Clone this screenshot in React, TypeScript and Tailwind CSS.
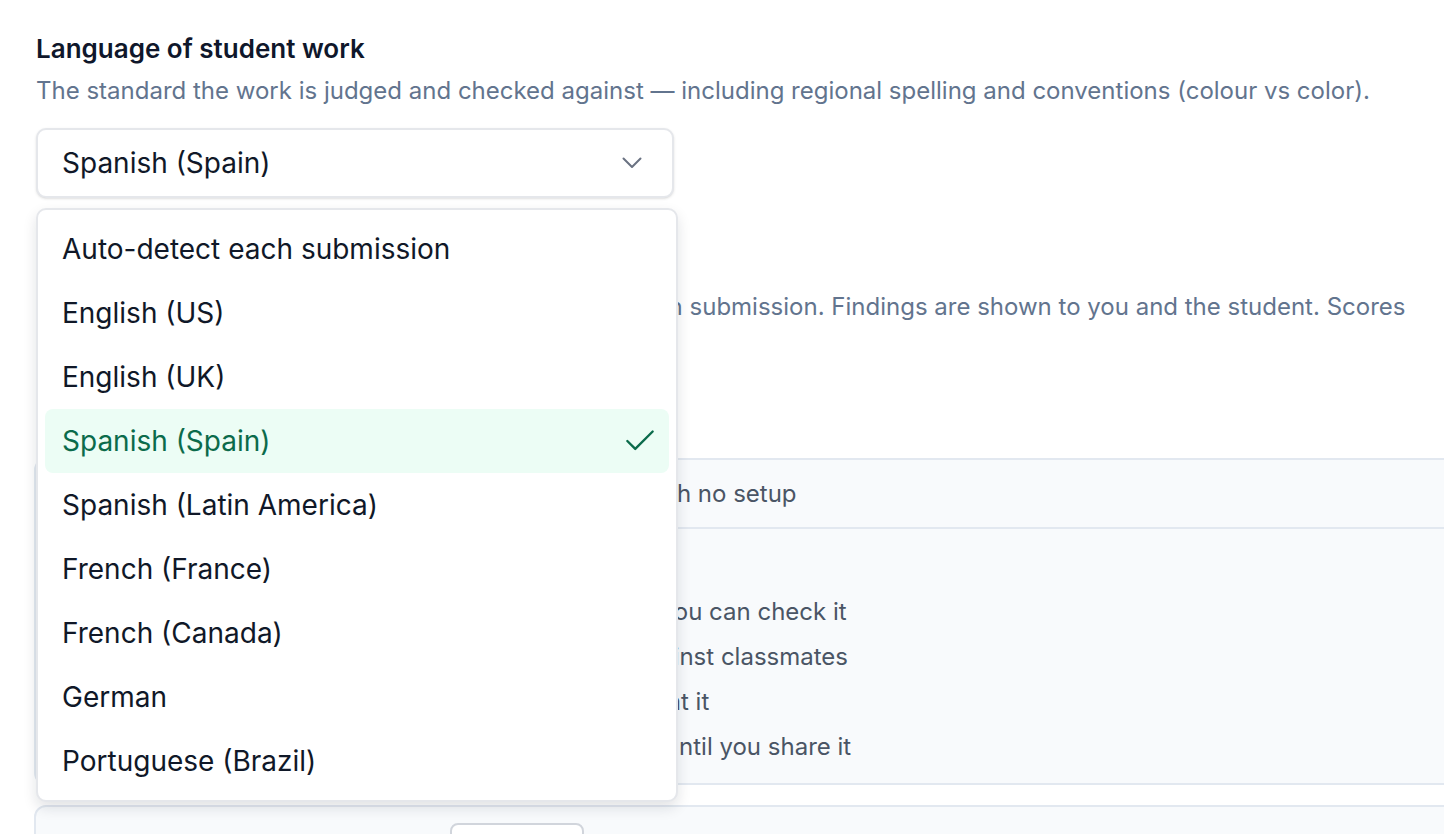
import { Check } from "lucide-react";

const LANGUAGES = [
  "Auto-detect each submission",
  "English (US)",
  "English (UK)",
  "Spanish (Spain)",
  "Spanish (Latin America)",
  "French (France)",
  "French (Canada)",
  "German",
  "Portuguese (Brazil)",
];

const SELECTED = "Spanish (Spain)";

function Chevron() {
  return (
    <svg width="20" height="12" viewBox="0 0 20 12" fill="none" className="text-gray-500">
      <path d="M1.5 1.5l8.5 8.5 8.5-8.5" stroke="currentColor" strokeWidth="2" strokeLinecap="round" strokeLinejoin="round" />
    </svg>
  );
}

function LanguageSelect() {
  return (
    <div className="relative w-[638px]">
      <button
        type="button"
        className="flex h-[70px] w-full items-center justify-between rounded-[10px] border-2 border-gray-200 bg-white pl-[24px] pr-[30px] text-left text-[28px] text-gray-900 shadow-sm"
      >
        <span>{SELECTED}</span>
        <Chevron />
      </button>

      {/* open listbox */}
      <div className="absolute left-0 top-[80px] z-10 w-[642px] rounded-[10px] border-2 border-gray-200 bg-white p-[7px] shadow-[0_6px_14px_rgba(15,23,42,0.12)]">
        {LANGUAGES.map((lang) => {
          const active = lang === SELECTED;
          return (
            <div
              key={lang}
              className={
                active
                  ? "flex h-[64px] items-center justify-between rounded-[8px] bg-[#ecfdf5] pl-[17px] pr-[10px] text-[28px] text-[#0b6b4b]"
                  : "flex h-[64px] items-center justify-between rounded-[8px] pl-[17px] pr-[10px] text-[28px] text-gray-900"
              }
            >
              <span>{lang}</span>
              {active && <Check size={38} strokeWidth={1.5} className="text-[#0b6b4b]" />}
            </div>
          );
        })}
      </div>
    </div>
  );
}

export default function App() {
  return (
    <div
      className="h-[834px] w-[1444px] overflow-hidden bg-white"
      style={{ fontFamily: "Inter, 'Noto Sans', sans-serif" }}
    >
      <div className="w-[1500px] pl-[36px] pt-[34px]">
        <section>
          <h2 className="text-[26px] font-semibold leading-[30px] text-slate-900">Language of student work</h2>
          <p className="mt-[12px] text-[24px] leading-[30px] text-slate-500">
            The standard the work is judged and checked against — including regional spelling and conventions (colour vs color).
          </p>
          <div className="mt-[22px]">
            <LanguageSelect />
          </div>
        </section>

        <section className="mt-[51px]">
          <h2 className="text-[26px] font-semibold leading-[30px] text-slate-900">Writing checks</h2>
          <p className="mt-[12px] w-[1390px] text-[24px] leading-[32px] text-slate-500">
            Automatically checks spelling, grammar and tone in each submission. Findings are shown to you and the student. Scores
            are never changed.
          </p>

          <div className="-ml-[2px] mt-[103px] w-[1480px] overflow-hidden rounded-[12px] border-2 border-slate-200 bg-slate-50">
            <div className="flex h-[69px] items-center border-b-2 border-slate-200 px-[26px] text-[24px] text-gray-600">
              Basic check — spelling, grammar and punctuation, with no setup
            </div>
            <div className="px-[26px] pb-[19px] pt-[22px] text-[24px] text-gray-600">
              <div className="font-medium leading-[34px] text-slate-900">Full review</div>
              <ul className="mt-[10px] space-y-[11px] leading-[34px]">
                <li>Feedback is written on each submission and held so you can check it</li>
                <li>Originality is screened against online sources and against classmates</li>
                <li>Nothing is released to students until you have looked at it</li>
                <li>Scores, flags and your comments stay private to you until you share it</li>
              </ul>
            </div>
          </div>

          <div className="-ml-[2px] mt-[20px] w-[1480px] rounded-[12px] border-2 border-slate-200 bg-slate-50 px-[26px] pt-[16px]">
            <div className="ml-[388px] h-[40px] w-[134px] rounded-[8px] border-2 border-gray-300 bg-white" />
          </div>
        </section>
      </div>
    </div>
  );
}
